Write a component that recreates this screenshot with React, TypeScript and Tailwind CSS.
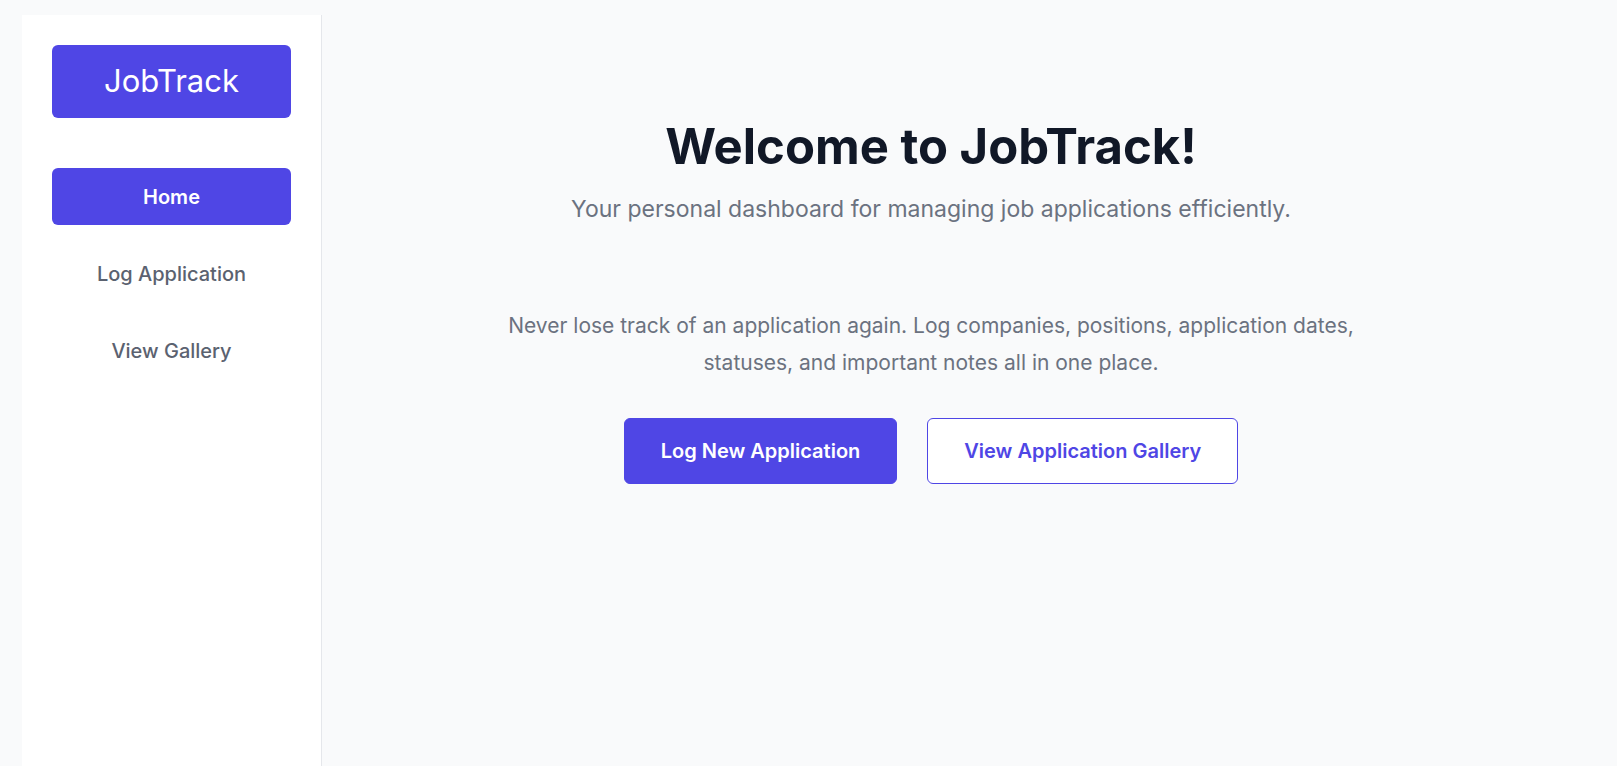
import React from "react";

const navItems = ["Home", "Log Application", "View Gallery"];

const Sidebar = () => {
  return (
    <aside className="w-[300px] shrink-0 bg-white border-r border-[#e5e7eb] p-[30px] flex flex-col">
      <div className="h-[73px] rounded-md bg-[#4f46e5] flex items-center justify-center">
        <span className="text-white text-[31px] font-normal">JobTrack</span>
      </div>
      <nav className="mt-[50px] flex flex-col gap-5">
        {navItems.map((item, i) => (
          <a
            key={item}
            href="#"
            className={
              i === 0
                ? "h-[57px] rounded-md bg-[#4f46e5] text-white text-[20px] font-semibold flex items-center justify-center"
                : "h-[57px] rounded-md text-[#5b6270] text-[20px] font-medium flex items-center justify-center"
            }
          >
            {item}
          </a>
        ))}
      </nav>
    </aside>
  );
};

const Home = () => {
  return (
    <main className="flex-1 pt-[107px] pr-[77px] flex flex-col items-center text-center">
      <h1 className="text-[49px] leading-none font-bold text-[#111827]">
        Welcome to JobTrack!
      </h1>
      <p className="mt-6 text-[23px] leading-7 text-[#6b7280]">
        Your personal dashboard for managing job applications efficiently.
      </p>
      <p className="mt-[84px] max-w-4xl text-[21px] leading-[37px] text-[#6b7280]">
        Never lose track of an application again. Log companies, positions,
        application dates, statuses, and important notes all in one place.
      </p>
      <div className="mt-[37px] flex gap-[30px]">
        <button className="h-[66px] px-9 rounded-md border border-[#4f46e5] bg-[#4f46e5] text-white text-[20px] font-semibold">
          Log New Application
        </button>
        <button className="h-[66px] px-9 rounded-md border border-[#4f46e5] bg-white text-[#4f46e5] text-[20px] font-semibold">
          View Application Gallery
        </button>
      </div>
    </main>
  );
};

const App = () => {
  return (
    <div className="h-screen flex bg-[#f9fafb] pl-[22px] pt-[15px] font-['Inter',sans-serif]">
      <Sidebar />
      <Home />
    </div>
  );
};

export default App;
